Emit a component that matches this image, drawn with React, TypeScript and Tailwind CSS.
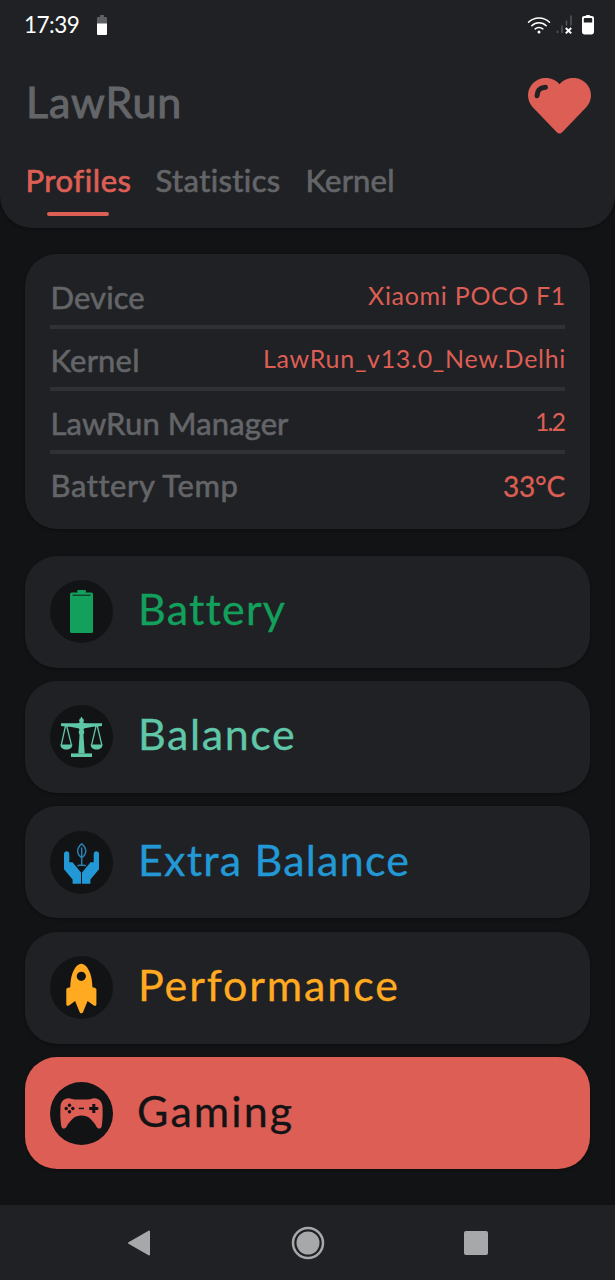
import type { ReactNode } from "react";

type Profile = {
  name: string;
  textClass: string;
  active?: boolean;
  icon: ReactNode;
};

const TABS = [
  { label: "Profiles", active: true, className: "w-[105px] tracking-[0.55px]" },
  { label: "Statistics", active: false, className: "w-[125px] tracking-[0.4px]" },
  { label: "Kernel", active: false, className: "w-[90px] tracking-[0.2px]" },
];

const INFO = [
  { label: "Device", labelClass: "tracking-[0.1px]", value: "Xiaomi POCO F1", valueClass: "text-[25px] tracking-[0.7px] -mr-px" },
  { label: "Kernel", labelClass: "tracking-[0.2px]", value: "LawRun_v13.0_New.Delhi", valueClass: "text-[25px] tracking-[0.7px] -mr-px" },
  { label: "LawRun Manager", labelClass: "tracking-[0.1px]", value: "1.2", valueClass: "text-[25px] tracking-[-2px] -mr-px pr-[2px]" },
  { label: "Battery Temp", labelClass: "tracking-[0.6px]", value: "33°C", valueClass: "text-[28px] tracking-[-0.2px] pt-1.5 [-webkit-text-stroke:0.3px]" },
];

function BatteryIcon() {
  return (
    <svg viewBox="0 0 63 63" className="size-full" fill="#12a05c">
      <rect x="27.3" y="10" width="8.6" height="3" rx="0.8" />
      <rect x="20" y="12.6" width="23" height="40.4" rx="1.6" />
      <path d="M22.5 15.2h18" stroke="#121315" strokeWidth="0.9" />
    </svg>
  );
}

function ScalesIcon() {
  return (
    <svg viewBox="0 0 63 63" className="size-full" fill="#5fc7a8">
      <circle cx="31.5" cy="15.6" r="2.4" />
      <path d="M31 12h1l.6 3h-2.2z" />
      <path d="M11 18.2c6 .2 13 .2 18-.2 1-1.2 4-1.2 5 0 5 .4 12 .4 18 .2v2.8c-6 .5-12 1-17.2 2.2l-3.3 2-3.3-2C23 22 17 21.5 11 21z" />
      <path d="M29.3 24h4.4l-.4 3.4 1.4 21.2h-6.4l1.4-21.2z" />
      <circle cx="31.5" cy="27.2" r="2.7" />
      <path d="M21 48.4h21V52H21z" />
      <path d="M10.4 39.4h12c0 3-2.600 5-6 5s-6-2-6-5zM40.600 39.400h12c0 3-2.600 5-6 5s-6-2-6-5z" />
      <path
        d="M15.600 20.500L11.300 39.800M16.600 20.500L21.400 39.800M46.200 20.500L41.600 39.800M47.200 20.500L51.800 39.800"
        fill="none"
        stroke="#5fc7a8"
        strokeWidth="1.300"
      />
    </svg>
  );
}

function HandsIcon() {
  return (
    <svg viewBox="0 0 63 63" className="size-full" fill="#2299d6">
      <path d="M14 23c0-3.600 5.300-3.600 5.300 0v8.300h3.200L31 41.500v11.200h-8.400V48.400L14 38.200z" />
      <path d="M49 23c0-3.600-5.300-3.600-5.300 0v8.300h-3.200L32 41.500v11.200h8.400V48.400L49 38.200z" />
      <path
        d="M31.700 12.800c-5.400 4.500-5.400 9.700 0 14 5.400-4.300 5.400-9.500 0-14zM31.700 17v17.300M28 34.600c1.500-.8 5.500-.8 7.300 0"
        fill="none"
        stroke="#2b7fae"
        strokeWidth="1.500"
        strokeLinecap="round"
      />
    </svg>
  );
}

function RocketIcon() {
  return (
    <svg viewBox="0 0 63 63" className="size-full" fill="#ffaa20">
      <path
        fillRule="evenodd"
        d="M31.300 7.800c1.600 0 4 1.200 5.700 3.500 4 5.500 5.200 12.500 5.400 19.800.3.500 4 1 4 2.200v14.900c0 1.700-1.500 2-2.600 1.200l-6.200-4.300-4.400 10.700c-.8 2-2.900 2-3.700 0l-4.400-10.700-6.100 4.300c-1.200.8-2.700.5-2.700-1.200V33.300c0-1.200 3.700-1.700 4-2.200.2-7.300 1.300-14.300 5.300-19.800 1.700-2.300 4.100-3.500 5.700-3.500zM31.300 15.700a4.600 4.600 0 1 0 0 9.200 4.600 4.600 0 0 0 0-9.200z"
      />
    </svg>
  );
}

function GamepadIcon() {
  return (
    <svg viewBox="0 0 63 63" className="size-full" fill="#dd5e54">
      <path d="M18.500 16.200c3 0 4 1.300 6.500 1.300h13c2.500 0 3.500-1.300 6.500-1.300 5 0 7.700 4 8 8.500.3 6 .2 13-.7 19-.5 3.600-4 3.800-5.400.8-1.500-3.200-4-5.800-6.600-8.300-2-2-5.100-2.800-8.300-2.800s-6.300.8-8.300 2.800c-2.600 2.500-5.100 5.100-6.600 8.300-1.400 3-4.900 2.800-5.400-.8-.9-6-1-13-.7-19 .3-4.500 3-8.500 8-8.500z" />
      <g fill="#121315">
        <circle cx="19.500" cy="23.200" r="1.700" />
        <circle cx="19.500" cy="29.700" r="1.700" />
        <circle cx="16.200" cy="26.500" r="1.700" />
        <circle cx="22.800" cy="26.500" r="1.700" />
        <rect x="28.800" y="25.700" width="5.200" height="1.500" />
        <path d="M42.300 22.100h3v2.900h3v3h-3v3h-3v-3h-3.100v-3h3.100z" />
      </g>
    </svg>
  );
}

const PROFILES: Profile[] = [
  { name: "Battery", textClass: "text-[#12a05c] tracking-[1.2px]", icon: <BatteryIcon /> },
  { name: "Balance", textClass: "text-[#5fc7a8] tracking-[1.6px]", icon: <ScalesIcon /> },
  { name: "Extra Balance", textClass: "text-[#2299d6] tracking-[1.2px]", icon: <HandsIcon /> },
  { name: "Performance", textClass: "text-[#ffaa20] tracking-[1.9px]", icon: <RocketIcon /> },
  { name: "Gaming", textClass: "text-[#121315] tracking-[2.1px]", active: true, icon: <GamepadIcon /> },
];

function StatusBar() {
  return (
    <div className="flex h-[50px] items-center justify-between pr-[21px] pl-[24px]">
      <div className="flex items-center">
        <span className="w-[73px] text-[22.500px] leading-[26px] tracking-[-0.5px] whitespace-nowrap text-white">
          17:39
        </span>
        <svg viewBox="0 0 10 20" className="h-5 w-[10px]">
          <path d="M3 0h4v2h2a1 1 0 0 1 1 1v6H0V3a1 1 0 0 1 1-1h2z" fill="#5f6063" />
          <path d="M0 8.500h10V19a1 1 0 0 1-1 1H1a1 1 0 0 1-1-1z" fill="#fff" />
        </svg>
      </div>
      <div className="flex items-center">
        <svg viewBox="0 0 24 18" className="mr-[5px] h-[18px] w-6" fill="none" stroke="#fff" strokeWidth="1.500" strokeLinecap="round">
          <path d="M1.500 6.200a15 15 0 0 1 21 0M4.800 9.800a10.300 10.300 0 0 1 14.400 0M8.200 12.900a5.500 5.500 0 0 1 7.600 0" />
          <circle cx="12" cy="16" r="1.500" fill="#fff" stroke="none" />
        </svg>
        <svg viewBox="0 0 18 20" className="mr-[8px] h-5 w-[18px]" fill="none">
          <path d="M1.500 15.500v2.500M6 10.500v7.500M10.500 5.500v5M15 .5v10" stroke="#55565a" strokeWidth="1.500" />
          <path d="M9.800 13l5.400 5.400M15.200 13l-5.400 5.400" stroke="#fff" strokeWidth="2" />
        </svg>
        <svg viewBox="0 0 12 20" className="h-5 w-[12px]">
          <path
            fillRule="evenodd"
            fill="#fff"
            d="M3.500 1c0-1.200 5-1.200 5 0h1.300C11.200 1 12 1.900 12 3.200v13.600c0 1.500-1 2.700-2.500 2.700h-7C1 19.500 0 18.300 0 16.800V3.200C0 1.900.8 1 2.200 1zM2.800 3c-.7 0-1 .3-1 .9V7.500h8.400V3.900c0-.6-.3-.9-1-.9z"
          />
        </svg>
      </div>
    </div>
  );
}

function HeartButton() {
  return (
    <button type="button" aria-label="Favorite" className="pt-[0.500px]">
      <svg viewBox="0 0 63 56" className="h-14 w-[63px]">
        <path
          d="M31.500 6.300C25-1.800 12.800-2.100 5.500 4.700-1.500 11.300-1.800 21.500 4.500 29l24.300 25.300c1.900 1.700 3.500 1.700 5.400 0L58.500 29c6.300-7.500 6-17.700-1-24.300C50.200-2.100 38-1.800 31.500 6.300z"
          fill="#dd5e54"
        />
        <path d="M9.100 17.700c.3-5.700 2.900-8 8.300-8.400" fill="none" stroke="#202124" strokeWidth="5" strokeLinecap="round" />
      </svg>
    </button>
  );
}

function Header() {
  return (
    <header className="h-[228px] rounded-b-[32px] bg-[#202124] shadow-[0_1px_3px_rgba(0,0,0,0.4)]">
      <StatusBar />
      <div className="flex h-[77px] items-start justify-between pt-[27px] pr-[24.500px] pl-[26px]">
        <h1 className="text-[43px] leading-[50px] tracking-[0.900px] text-[#646568] [-webkit-text-stroke:1px]">
          LawRun
        </h1>
        <HeartButton />
      </div>
      <nav className="mt-[35px] flex gap-[25px] pl-[25.500px]">
        {TABS.map((tab) => (
          <div key={tab.label} className={tab.className}>
            <span
              className={`block text-[31px] leading-9 whitespace-nowrap [-webkit-text-stroke:0.7px] ${tab.active ? "text-[#dd5e54]" : "text-[#646568]"}`}
            >
              {tab.label}
            </span>
            {tab.active && <div className="mx-auto mt-[14px] h-[4px] w-[62px] rounded-sm bg-[#dd5e54]" />}
          </div>
        ))}
      </nav>
    </header>
  );
}

function InfoCard() {
  return (
    <section className="h-[275px] rounded-[32px] bg-[#202124] px-[25px] pt-[12px] shadow-[0_1px_3px_rgba(0,0,0,0.4)]">
      {INFO.map((row) => (
        <div
          key={row.label}
          className="flex h-[62.700px] items-center justify-between border-b-4 border-[#303134] last:border-transparent"
        >
          <span className={`pt-1 pl-[0.500px] text-[31px] leading-9 text-[#646568] [-webkit-text-stroke:0.6px] ${row.labelClass}`}>
            {row.label}
          </span>
          <span className={`leading-9 whitespace-nowrap text-[#dd5e54] ${row.valueClass}`}>{row.value}</span>
        </div>
      ))}
    </section>
  );
}

function ProfileCard({ profile }: { profile: Profile }) {
  return (
    <button
      type="button"
      className={`flex h-[112px] items-center rounded-[32px] pl-[25px] shadow-[0_1px_3px_rgba(0,0,0,0.4)] ${profile.active ? "bg-[#dd5e54]" : "bg-[#202124]"}`}
    >
      <span className="size-[63px] rounded-full bg-[#121315]">{profile.icon}</span>
      <span
        className={`pb-[5px] text-[43px] leading-[50px] [-webkit-text-stroke:0.3px] ${profile.active ? "ml-[24px]" : "ml-[25px]"} ${profile.textClass}`}
      >
        {profile.name}
      </span>
    </button>
  );
}

function NavigationBar() {
  return (
    <footer className="flex h-[75px] items-center justify-between bg-[#202124] pr-[127px] pl-[127px]">
      <svg viewBox="0 0 24 26" className="h-[26px] w-6">
        <path d="M2 13L22 1.500v23z" fill="#a7a8aa" stroke="#a7a8aa" strokeWidth="2" strokeLinejoin="round" />
      </svg>
      <svg viewBox="0 0 34 34" className="size-[34px]">
        <circle cx="17" cy="17" r="15" fill="none" stroke="#a7a8aa" strokeWidth="2.500" />
        <circle cx="17" cy="17" r="11.500" fill="#a7a8aa" />
      </svg>
      <div className="size-6 rounded-[2px] bg-[#a7a8aa]" />
    </footer>
  );
}

export default function App() {
  return (
    <div className="flex h-[1280px] w-[615px] flex-col overflow-hidden bg-[#121315] font-['Lato',sans-serif]">
      <Header />
      <main className="flex-1 px-[25px] pt-[26px]">
        <InfoCard />
        <div className="mt-[26.500px] flex flex-col gap-[13.400px]">
          {PROFILES.map((profile) => (
            <ProfileCard key={profile.name} profile={profile} />
          ))}
        </div>
      </main>
      <NavigationBar />
    </div>
  );
}
